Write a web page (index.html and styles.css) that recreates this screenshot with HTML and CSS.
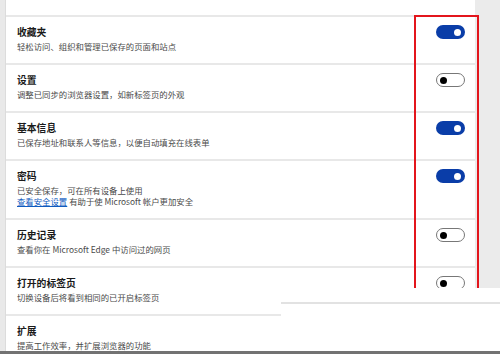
FILE: index.html
```html
<!DOCTYPE html>
<html lang="zh-CN">
<head>
<meta charset="utf-8">
<link rel="stylesheet" href="styles.css">
</head>
<body>
<div class="screen">
  <div class="left-strip"></div>
  <div class="card">
    <div class="card-top"></div>
    <div class="row">
      <div class="text">
        <div class="title">收藏夹</div>
        <div class="desc">轻松访问、组织和管理已保存的页面和站点</div>
      </div>
      <span class="toggle on"></span>
    </div>
    <div class="row">
      <div class="text">
        <div class="title">设置</div>
        <div class="desc">调整已同步的浏览器设置，如新标签页的外观</div>
      </div>
      <span class="toggle off"></span>
    </div>
    <div class="row">
      <div class="text">
        <div class="title">基本信息</div>
        <div class="desc">已保存地址和联系人等信息，以便自动填充在线表单</div>
      </div>
      <span class="toggle on"></span>
    </div>
    <div class="row">
      <div class="text">
        <div class="title">密码</div>
        <div class="desc">已安全保存，可在所有设备上使用</div>
        <div class="desc"><a class="link">查看安全设置</a> 有助于使 Microsoft 帐户更加安全</div>
      </div>
      <span class="toggle on"></span>
    </div>
    <div class="row">
      <div class="text">
        <div class="title">历史记录</div>
        <div class="desc">查看你在 Microsoft Edge 中访问过的网页</div>
      </div>
      <span class="toggle off"></span>
    </div>
    <div class="row">
      <div class="text">
        <div class="title">打开的标签页</div>
        <div class="desc">切换设备后将看到相同的已开启标签页</div>
      </div>
      <span class="toggle off"></span>
    </div>
    <div class="row">
      <div class="text">
        <div class="title">扩展</div>
        <div class="desc">提高工作效率，并扩展浏览器的功能</div>
      </div>
    </div>
  </div>
  <div class="right-strip"></div>
  <div class="highlight"></div>
  <div class="popup"><div class="popup-line"></div></div>
  <div class="bottom-bar"></div>
</div>
</body>
</html>
```

FILE: styles.css
```css
html, body {
  margin: 0;
  padding: 0;
  background: #ffffff;
}
body {
  width: 500px;
  height: 354px;
  overflow: hidden;
  font-family: "Noto Sans CJK SC", "Noto Sans", sans-serif;
}
.screen {
  position: relative;
  display: flex;
  width: 500px;
  height: 354px;
  overflow: hidden;
}
.left-strip {
  width: 5px;
  flex: none;
  background: #e9e9e9;
  border-right: 1px solid #dcdcdc;
}
.card {
  width: 469px;
  flex: none;
  background: #ffffff;
}
.right-strip {
  flex: 1;
  background: #ebebeb;
}
.card-top {
  height: 15px;
  border-bottom: 2px solid #e8e8e8;
}
.row {
  display: flex;
  align-items: flex-start;
  justify-content: space-between;
  padding: 8px 10px 11px 11px;
  border-bottom: 2px solid #e8e8e8;
}
.title {
  font-size: 9.8px;
  line-height: 14px;
  font-weight: 700;
  color: #1a1a1a;
}
.desc {
  font-size: 8.4px;
  line-height: 11px;
  color: #4a4a4a;
}
.title + .desc {
  margin-top: 2px;
}
.link {
  color: #0f5bbf;
  text-decoration: underline;
}
.toggle {
  position: relative;
  flex: none;
  width: 29px;
  height: 14px;
  box-sizing: border-box;
  border-radius: 7px;
}
.toggle::after {
  content: "";
  position: absolute;
  top: 50%;
  width: 7px;
  height: 7px;
  margin-top: -3.5px;
  border-radius: 50%;
}
.toggle.on {
  background: #0a3da8;
}
.toggle.on::after {
  right: 4px;
  background: #ffffff;
}
.toggle.off {
  background: #ffffff;
  border: 1px solid #777777;
}
.toggle.off::after {
  left: 3px;
  background: #000000;
}
.highlight {
  position: absolute;
  left: 414px;
  top: 15px;
  width: 61px;
  height: 300px;
  border: 2px solid #e3151c;
}
.popup {
  position: absolute;
  left: 281px;
  top: 288px;
  right: 0;
  bottom: 0;
  background: #ffffff;
  padding-top: 14px;
}
.popup-line {
  height: 2px;
  background: #e2e2e2;
}
.bottom-bar {
  position: absolute;
  left: 0;
  right: 0;
  bottom: 0;
  height: 3px;
  background: #727272;
}
```
